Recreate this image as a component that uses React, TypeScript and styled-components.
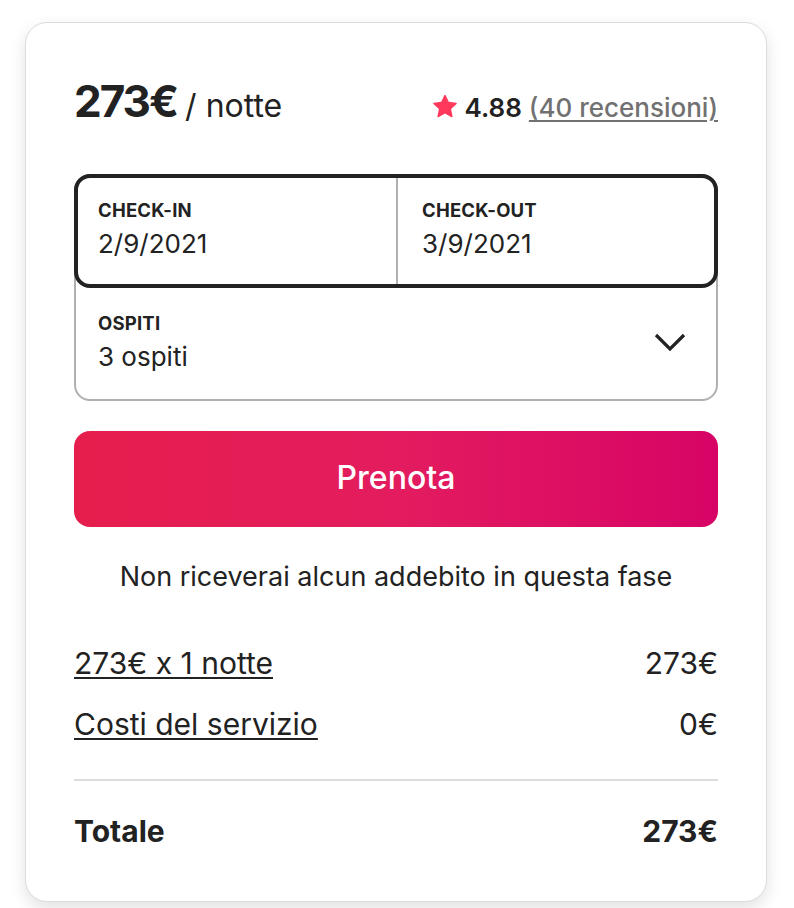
import styled, { createGlobalStyle } from "styled-components";

const GlobalStyle = createGlobalStyle`
  body {
    margin: 0;
    background: #ffffff;
    font-family: "Inter", "Liberation Sans", sans-serif;
    color: #222222;
    -webkit-font-smoothing: antialiased;
  }
`;

type Line = {
    label: string;
    amount: string;
};

const lines: Line[] = [
    { label: "273€ x 1 notte", amount: "273€" },
    { label: "Costi del servizio", amount: "0€" },
];

function Star(): JSX.Element {
    return (
        <StarIcon viewBox="0 0 32 32" aria-hidden="true">
            <path d="M15.094 1.579l-4.124 8.885-9.86 1.27a1 1 0 0 0-.542 1.736l7.293 6.565-1.965 9.852a1 1 0 0 0 1.483 1.061L16 25.951l8.625 4.997a1 1 0 0 0 1.482-1.06l-1.965-9.853 7.293-6.565a1 1 0 0 0-.541-1.735l-9.86-1.271-4.127-8.885a1 1 0 0 0-1.814 0z" />
        </StarIcon>
    );
}

function Chevron(): JSX.Element {
    return (
        <ChevronIcon viewBox="0 0 32 18" aria-hidden="true">
            <path d="M2 2 L16 16 L30 2" />
        </ChevronIcon>
    );
}

export default function App(): JSX.Element {
    return (
        <Page>
            <GlobalStyle />
            <Card>
                <Header>
                    <Price>
                        <Amount>273€</Amount>
                        <PerNight>/ notte</PerNight>
                    </Price>
                    <Rating>
                        <Star />
                        <Score>4.88</Score>
                        <Reviews>(40 recensioni)</Reviews>
                    </Rating>
                </Header>

                <Picker>
                    <Dates>
                        <DateCell>
                            <FieldLabel>CHECK-IN</FieldLabel>
                            <FieldValue>2/9/2021</FieldValue>
                        </DateCell>
                        <DateCell $divider>
                            <FieldLabel>CHECK-OUT</FieldLabel>
                            <FieldValue>3/9/2021</FieldValue>
                        </DateCell>
                    </Dates>
                    <Guests>
                        <div>
                            <FieldLabel>OSPITI</FieldLabel>
                            <FieldValue>3 ospiti</FieldValue>
                        </div>
                        <Chevron />
                    </Guests>
                </Picker>

                <BookButton type="button">Prenota</BookButton>

                <Note>Non riceverai alcun addebito in questa fase</Note>

                <Lines>
                    {lines.map((line) => (
                        <Row key={line.label}>
                            <RowLabel>{line.label}</RowLabel>
                            <span>{line.amount}</span>
                        </Row>
                    ))}
                </Lines>

                <Divider />

                <TotalRow>
                    <span>Totale</span>
                    <span>273€</span>
                </TotalRow>
            </Card>
        </Page>
    );
}

const Page = styled.div`
  padding: 22px 27px 8px 25px;
`;

const Card = styled.div`
  width: 742px;
  box-sizing: border-box;
  border: 1px solid #dddddd;
  border-radius: 22px;
  background: #ffffff;
  box-shadow: rgba(0, 0, 0, 0.12) 0 6px 16px;
  padding: 50px 48px 50px;
`;

const Header = styled.div`
  display: flex;
  justify-content: space-between;
  align-items: baseline;
`;

const Price = styled.div`
  display: flex;
  align-items: baseline;
  gap: 8px;
`;

const Amount = styled.span`
  font-size: 44px;
  line-height: 56px;
  font-weight: 700;
  letter-spacing: -2px;
`;

const PerNight = styled.span`
  font-size: 32px;
  line-height: 40px;
  font-weight: 400;
`;

const Rating = styled.div`
  display: flex;
  align-items: baseline;
  font-size: 26px;
  line-height: 32px;
`;

const StarIcon = styled.svg`
  width: 24px;
  height: 24px;
  fill: #ff385c;
  margin-right: 8px;
  align-self: center;
  position: relative;
  top: -2px;
`;

const Score = styled.span`
  font-weight: 600;
  margin-right: 7px;
`;

const Reviews = styled.span`
  color: #717171;
  font-weight: 500;
  text-decoration: underline;
  text-decoration-thickness: 2px;
  text-underline-offset: 3px;
`;

const Picker = styled.div`
  margin-top: 45px;
  border: 2px solid #b0b0b0;
  border-radius: 16px;
`;

const Dates = styled.div`
  margin: -2px -2px 0;
  display: grid;
  grid-template-columns: 1fr 1fr;
  border: 4px solid #222222;
  border-radius: 16px;
`;

const DateCell = styled.div<{ $divider?: boolean }>`
  padding: 19.5px 20px 23px ${(p) => (p.$divider ? "24px" : "20px")};
  border-left: ${(p) => (p.$divider ? "2px solid #b0b0b0" : "none")};
`;

const FieldLabel = styled.div`
  font-size: 18.5px;
  line-height: 24px;
  font-weight: 700;
  letter-spacing: 0.2px;
  margin-bottom: 5px;
`;

const FieldValue = styled.div`
  font-size: 26px;
  line-height: 34px;
  font-weight: 400;
`;

const Guests = styled.div`
  display: flex;
  justify-content: space-between;
  align-items: center;
  padding: 23px 30px 25.5px 22px;
`;

const ChevronIcon = styled.svg`
  width: 32px;
  height: 18px;
  fill: none;
  stroke: #222222;
  stroke-width: 3.2;
`;

const BookButton = styled.button`
  display: block;
  width: 100%;
  height: 96px;
  margin-top: 30px;
  padding: 0 0 4px;
  border: none;
  border-radius: 16px;
  background: linear-gradient(to right, #e61e4d 0%, #e31c5f 50%, #d70466 100%);
  color: #ffffff;
  font-family: inherit;
  font-size: 32px;
  font-weight: 500;
  cursor: pointer;
`;

const Note = styled.p`
  margin: 32px 0 0;
  text-align: center;
  font-size: 27px;
  line-height: 36px;
`;

const Lines = styled.div`
  margin-top: 48px;
  display: flex;
  flex-direction: column;
  gap: 21px;
`;

const Row = styled.div`
  display: flex;
  justify-content: space-between;
  font-size: 30px;
  line-height: 40px;
`;

const RowLabel = styled.span`
  text-decoration: underline;
  text-decoration-thickness: 2px;
  text-underline-offset: 3px;
`;

const Divider = styled.hr`
  margin: 35px 0 0;
  border: none;
  border-top: 2px solid #dddddd;
`;

const TotalRow = styled(Row)`
  margin-top: 30px;
  font-weight: 700;
`;
